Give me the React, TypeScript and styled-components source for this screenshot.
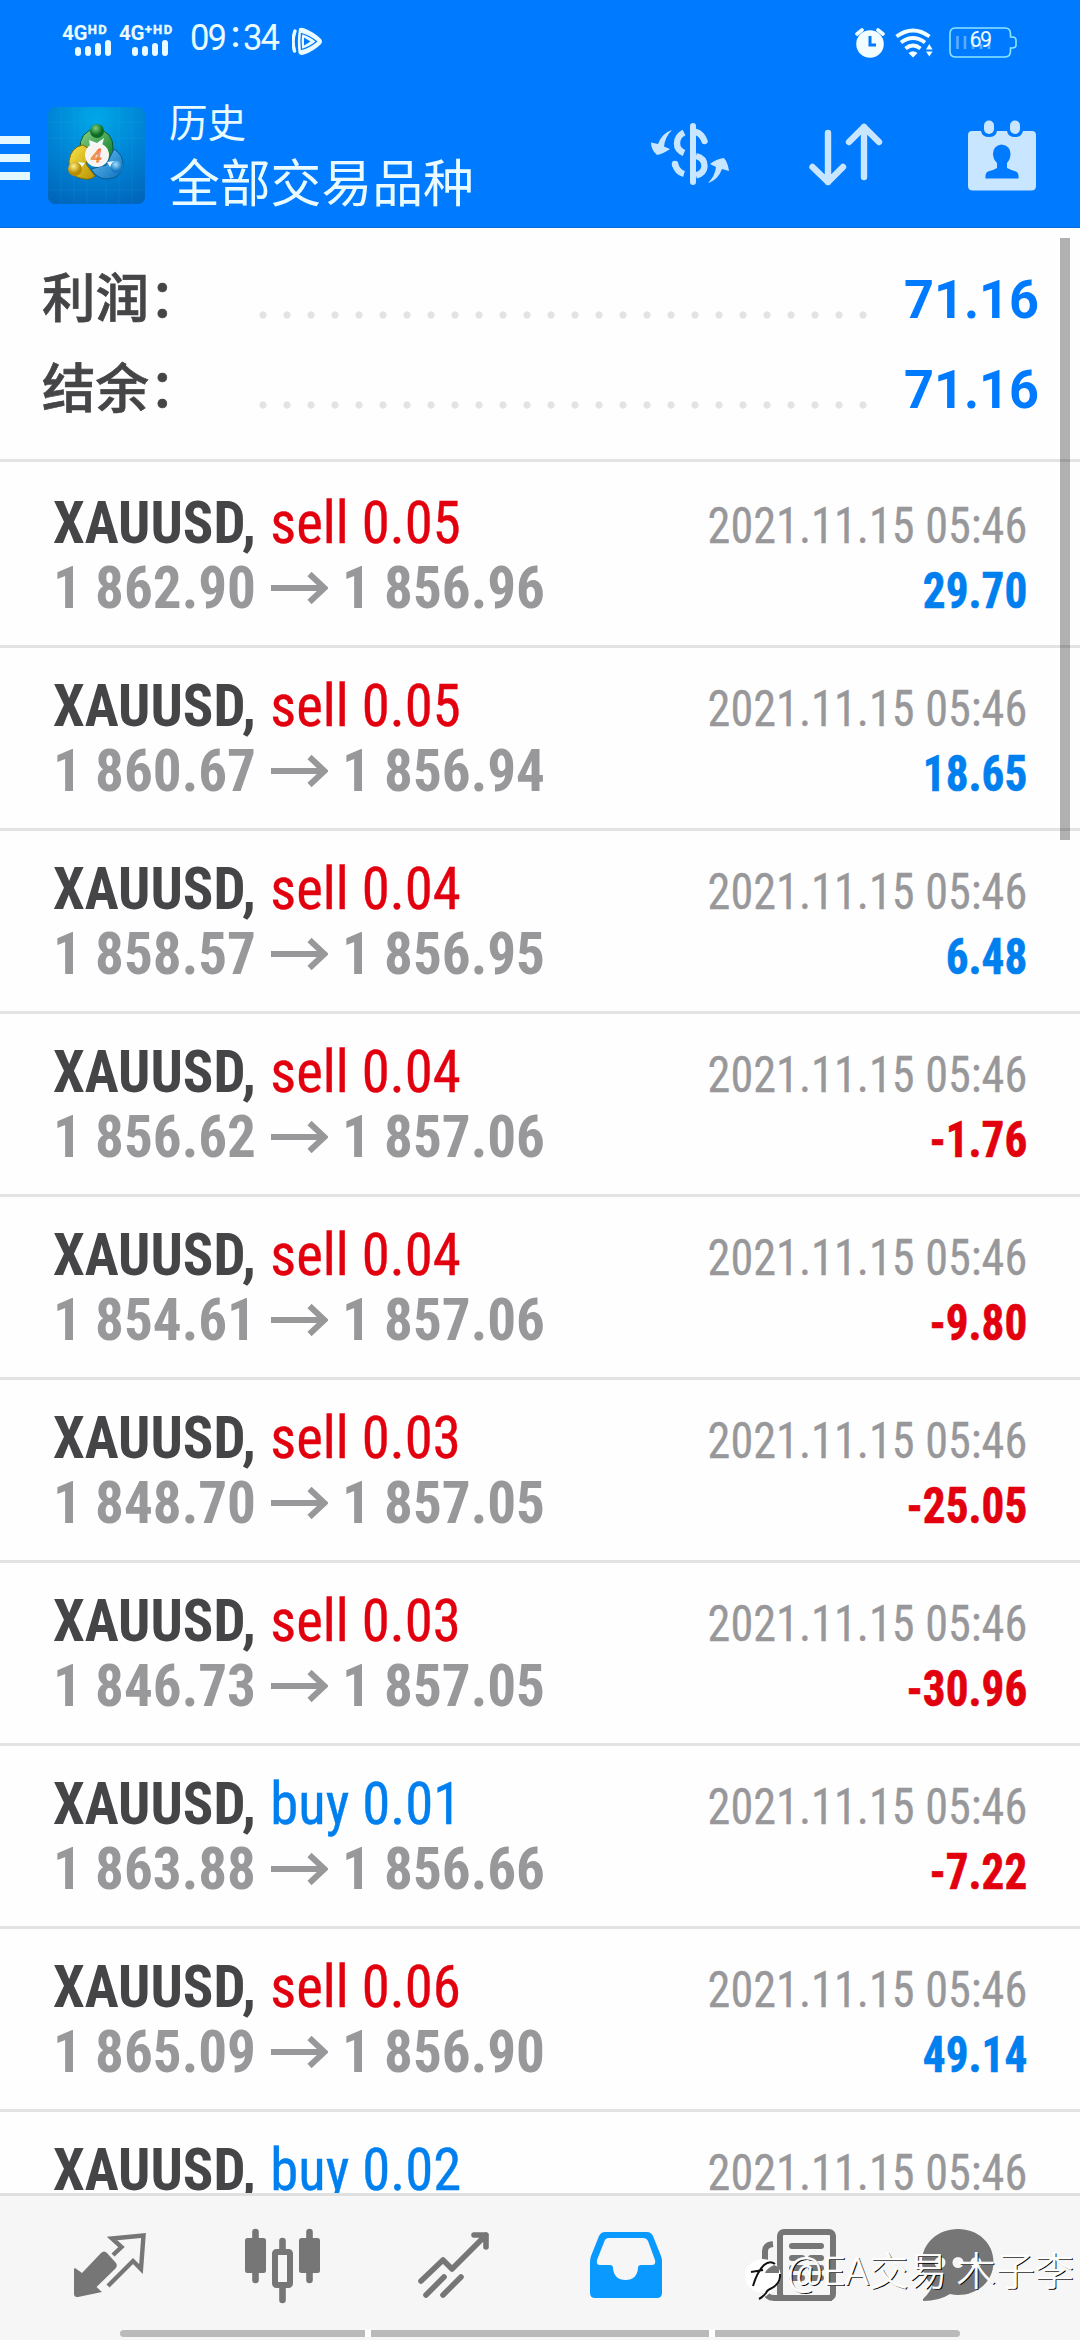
import React from 'react';
import styled, { createGlobalStyle } from 'styled-components';

const BLUE = '#007bff';
const VALUE_BLUE = '#007fef';
const RED = '#e2000f';
const GREY = '#98989b';
const INK = '#454547';
const LINE = '#e3e3e3';
const ICE = '#c8e6ff';
const NAV_ICON = '#767676';

const CJK = '"Noto Sans CJK SC", sans-serif';
const CONDENSED = '"Roboto Condensed", Roboto, sans-serif';

const GlobalStyle = createGlobalStyle`
  body { margin: 0; background: #fff; }
  * { box-sizing: border-box; }
  svg { display: block; flex: none; }
`;

const Screen = styled.div`
  position: relative;
  display: flex;
  flex-direction: column;
  width: 1080px;
  height: 2340px;
  overflow: hidden;
  background: #fefefe;
  font-family: ${CONDENSED};
`;

const Header = styled.header`
  display: flex;
  flex-direction: column;
  height: 228px;
  background: ${BLUE};
  border-bottom: 1px solid #0a6fd8;
  color: #e9fbff;
`;

const StatusBar = styled.div`
  display: flex;
  justify-content: space-between;
  height: 84px;
  padding: 0 63px 0 62px;
`;

const StatusGroup = styled.div`
  display: flex;
  align-items: flex-start;
`;

const Network = styled.div<{ $width: number }>`
  display: flex;
  flex-direction: column;
  width: ${p => p.$width}px;
  padding-top: 24px;
`;

const NetworkLabel = styled.div`
  display: flex;
  align-items: flex-start;
  height: 16px;
  font: 700 20.5px/18px Roboto, sans-serif;
  letter-spacing: -0.3px;
  white-space: nowrap;
`;

const NetworkTag = styled.span`
  margin-left: 0.5px;
  font-size: 13px;
  line-height: 12px;
  letter-spacing: 1.4px;
  -webkit-text-stroke: 0.4px currentColor;
`;

const Bars = styled.div`
  display: flex;
  align-items: flex-end;
  gap: 4px;
  height: 16px;
  margin-left: 13px;
`;

const Bar = styled.i<{ $height: number }>`
  width: 6px;
  height: ${p => p.$height}px;
  border-radius: 3px;
  background: #e9fbff;
`;

const Clock = styled.time`
  display: flex;
  align-items: flex-start;
  width: 102px;
  padding-top: 17px;
  font: 400 36px/42px Roboto, sans-serif;
  letter-spacing: -2px;
  white-space: nowrap;
`;

const ClockDigits = styled.span`
  width: 36px;
  transform: scaleX(0.96);
  transform-origin: left;
`;

const ClockColon = styled.span`
  width: 17px;
  margin-top: -3px;
  text-align: center;
  font-weight: 500;
`;

const StatusIcon = styled.div<{ $top: number; $gap?: number }>`
  padding-top: ${p => p.$top}px;
  margin-right: ${p => p.$gap ?? 0}px;
`;

const Battery = styled.div`
  position: relative;
`;

const BatteryLevel = styled.span`
  position: absolute;
  left: 0;
  top: 27px;
  width: 62px;
  text-align: center;
  font: 400 21.5px/26px Roboto, sans-serif;
  letter-spacing: -1.5px;
`;

const Toolbar = styled.div`
  display: flex;
  align-items: flex-start;
  flex: 1;
`;

const MenuButton = styled.button`
  display: flex;
  flex-direction: column;
  gap: 10px;
  width: 48px;
  margin: 52px 0 0;
  padding: 0;
  border: 0;
  background: none;
`;

const MenuStroke = styled.i`
  width: 30px;
  height: 8px;
  background: #e4f8ff;
`;

const Logo = styled.div`
  margin: 23px 24px 0 0;
`;

const Titles = styled.div`
  display: flex;
  flex-direction: column;
  width: 482px;
  font-family: ${CJK};
`;

const Title = styled.div`
  margin-top: 10px;
  font-size: 38.5px;
  line-height: 52px;
`;

const Subtitle = styled.div`
  font-size: 50.8px;
  line-height: 68px;
`;

const Actions = styled.div`
  display: flex;
  align-items: flex-start;
`;

const ActionIcon = styled.div<{ $top: number; $gap: number }>`
  padding-top: ${p => p.$top}px;
  margin-right: ${p => p.$gap}px;
`;

const Content = styled.main`
  flex: 1;
  min-height: 0;
  overflow: hidden;
`;

const Summary = styled.section`
  height: 234px;
  padding: 27px 41px 0 42px;
  border-bottom: 3px solid ${LINE};
`;

const SummaryRow = styled.div`
  display: flex;
  align-items: center;
  height: 90px;
`;

const SummaryLabel = styled.span`
  width: 209px;
  padding-bottom: 11px;
  color: ${INK};
  font: 500 53.5px/79px ${CJK};
  -webkit-text-stroke: 0.7px currentColor;
`;

const Leader = styled.span`
  width: 624px;
  height: 8px;
  margin-top: 29px;
  background: radial-gradient(circle at center, ${LINE} 3.2px, transparent 4px) 0 0 / 24px 8px repeat-x;
`;

const SummaryValue = styled.span`
  flex: 1;
  color: ${BLUE};
  text-align: right;
  font: 700 53px/90px Roboto, sans-serif;
  transform: scaleX(0.985);
  transform-origin: right;
`;

const Deals = styled.section`
  padding-top: 3px;
`;

const Deal = styled.article`
  display: flex;
  justify-content: space-between;
  height: 183px;
  padding: 25px 53px 0 53px;
  border-bottom: 3px solid ${LINE};
  white-space: pre;
`;

const DealMain = styled.div``;

const DealSide = styled.div`
  padding-top: 4px;
  text-align: right;
`;

const DealHead = styled.div`
  display: flex;
  color: ${INK};
  font-size: 60px;
  line-height: 65px;
  transform: scaleX(0.945);
  transform-origin: left;
`;

const Symbol = styled.b`
  width: 230px;
`;

const Side = styled.span<{ $buy: boolean }>`
  color: ${p => (p.$buy ? VALUE_BLUE : RED)};
  -webkit-text-stroke: 0.4px currentColor;
`;

const Prices = styled.div`
  display: flex;
  align-items: center;
  color: ${GREY};
`;

const Price = styled.b<{ $width: number }>`
  width: ${p => p.$width}px;
  font-size: 60px;
  line-height: 65px;
  transform: scaleX(0.952);
  transform-origin: left;
`;

const PriceArrow = styled.span`
  margin: 0 14px 0 1px;
`;

const Stamp = styled.div`
  color: ${GREY};
  font-size: 49.5px;
  line-height: 65px;
  transform: scaleX(0.934);
  transform-origin: right;
  -webkit-text-stroke: 0.3px currentColor;
`;

const Profit = styled.div<{ $loss: boolean }>`
  color: ${p => (p.$loss ? RED : VALUE_BLUE)};
  font-size: 49.5px;
  font-weight: 700;
  line-height: 65px;
  transform: scaleX(0.912);
  transform-origin: right;
  -webkit-text-stroke: 0.6px currentColor;
`;

const ScrollThumb = styled.div`
  position: absolute;
  left: 1060px;
  top: 238px;
  width: 10px;
  height: 602px;
  background: rgba(0, 0, 0, 0.3);
`;

const Nav = styled.nav`
  position: relative;
  display: flex;
  flex-direction: column;
  height: 147px;
  border-top: 3px solid #e0e0e0;
  background: #f6f6f6;
`;

const Tabs = styled.div`
  display: flex;
  height: 134px;
  padding: 32px 24px 0;
`;

const Tab = styled.div`
  display: flex;
  justify-content: center;
  width: 172px;
`;

const GestureBar = styled.div`
  display: flex;
  gap: 6px;
  width: 840px;
  height: 7px;
  margin-left: 120px;
  border-radius: 4px;
  overflow: hidden;
  background: #fff;
`;

const GesturePart = styled.i<{ $width: number }>`
  width: ${p => p.$width}px;
  background: #bababa;
`;

const Watermark = styled.div`
  position: absolute;
  left: 745px;
  top: 57px;
  display: flex;
  align-items: flex-start;
  color: #fff;
  font: 300 39px/46px Roboto, ${CJK};
  text-shadow: 1.3px 1.3px 0 #000;
  -webkit-text-stroke: 0.6px #fff;
  white-space: pre;
`;

const WatermarkText = styled.span`
  margin: -4px 0 0 5px;
`;

const deals = [
  ['sell 0.05', '1 862.90', '1 856.96', '29.70'],
  ['sell 0.05', '1 860.67', '1 856.94', '18.65'],
  ['sell 0.04', '1 858.57', '1 856.95', '6.48'],
  ['sell 0.04', '1 856.62', '1 857.06', '-1.76'],
  ['sell 0.04', '1 854.61', '1 857.06', '-9.80'],
  ['sell 0.03', '1 848.70', '1 857.05', '-25.05'],
  ['sell 0.03', '1 846.73', '1 857.05', '-30.96'],
  ['buy 0.01', '1 863.88', '1 856.66', '-7.22'],
  ['sell 0.06', '1 865.09', '1 856.90', '49.14'],
  ['buy 0.02'],
];

const Signal = ({ plus, width }: { plus?: boolean; width: number }) => (
  <Network $width={width}>
    <NetworkLabel>
      4G<NetworkTag>{plus ? '+HD' : 'HD'}</NetworkTag>
    </NetworkLabel>
    <Bars>
      {[9, 10, 13, 16].map(h => (
        <Bar key={h} $height={h} />
      ))}
    </Bars>
  </Network>
);

const PlayIcon = () => (
  <svg width="31" height="29" viewBox="0 0 31 29">
    <path d="M7 1.5Q9 0 12 1.2Q22 5 29 12Q31 14.5 29 17Q22 24 12 27.6Q8 28.6 6.5 26Q5 14 7 1.5Z" fill="#e9fbff" />
    <path d="M3 4Q-0.500 14 2.500 24" fill="none" stroke="#e9fbff" strokeWidth="3.4" strokeLinecap="round" />
    <path d="M9.5 6.5Q18 9 24.5 14.5Q18 20 9.5 22.5Q8.5 14 9.5 6.5Z" fill="none" stroke={BLUE} strokeWidth="1.3" />
    <path d="M12 10.5L18.5 14.5L12 18.5Z" fill={BLUE} />
  </svg>
);

const AlarmIcon = () => (
  <svg width="30" height="30" viewBox="0 0 30 30">
    <circle cx="15" cy="16" r="13.8" fill="#f1fdff" />
    <path d="M2 6L7 2M23 2L28 6" stroke="#f1fdff" strokeWidth="3.6" strokeLinecap="round" />
    <path d="M15 8V17H21" fill="none" stroke={BLUE} strokeWidth="3" />
  </svg>
);

const WifiIcon = () => (
  <svg width="40" height="30" viewBox="0 0 40 30">
    <g fill="none" stroke="#f1fdff" strokeWidth="3.8">
      <path d="M1.5 8.5Q18 -3.5 34.5 8.5" />
      <path d="M6 14.5Q18 5.5 30 14.5" />
      <path d="M10.5 20.5Q18 14.5 25.5 20.5" />
    </g>
    <path d="M13.5 25Q18 21.5 22.5 25L18 29.5Z" fill="#f1fdff" />
    <path d="M31 21.5L34.3 16L37.6 21.5ZM31 23.5L34.3 28.5L37.6 23.5Z" fill="#f1fdff" />
  </svg>
);

const BatteryIcon = () => (
  <svg width="68" height="31" viewBox="0 0 68 31">
    <path
      d="M6 1H56Q61.5 1 61.5 7V10H63Q67 10 67 13V18Q67 21 63 21H61.5V24Q61.5 30 56 30H6Q1 30 1 24V7Q1 1 6 1Z"
      fill="none" stroke="#8fe6ff" strokeWidth="1.6"
    />
    <path d="M8.5 9V22M16 9V22M24 9V22M32 17V22M40 12V22" stroke="#5eacff" strokeWidth="2.6" />
  </svg>
);

const MetaTraderLogo = () => (
  <svg width="97" height="97" viewBox="0 0 97 97">
    <defs>
      <radialGradient id="tile" cx="50%" cy="12%" r="95%">
        <stop offset="0" stopColor="#00a8e8" />
        <stop offset="0.5" stopColor="#0085d6" />
        <stop offset="1" stopColor="#0066bc" />
      </radialGradient>
      <linearGradient id="green" x1="0" y1="0" x2="1" y2="1">
        <stop offset="0" stopColor="#8fd48b" />
        <stop offset="1" stopColor="#087a26" />
      </linearGradient>
      <linearGradient id="gold" x1="0" y1="0" x2="1" y2="1">
        <stop offset="0" stopColor="#fbe64a" />
        <stop offset="1" stopColor="#b99000" />
      </linearGradient>
      <linearGradient id="azure" x1="0" y1="0" x2="1" y2="1">
        <stop offset="0" stopColor="#69c4f4" />
        <stop offset="1" stopColor="#0c6fba" />
      </linearGradient>
      <radialGradient id="greenBall" cx="40%" cy="30%">
        <stop offset="0" stopColor="#7dcf7d" />
        <stop offset="1" stopColor="#0b6b22" />
      </radialGradient>
      <radialGradient id="goldBall" cx="40%" cy="30%">
        <stop offset="0" stopColor="#fff08a" />
        <stop offset="1" stopColor="#b88c00" />
      </radialGradient>
      <radialGradient id="azureBall" cx="40%" cy="30%">
        <stop offset="0" stopColor="#a5e0fb" />
        <stop offset="1" stopColor="#1278c4" />
      </radialGradient>
    </defs>
    <rect width="97" height="97" rx="7" fill="url(#tile)" />
    <path d="M13 0V97M26 0V97M39 0V97M58 0V97M71 0V97M84 0V97M0 15H97M0 31H97M0 83H97" stroke="#35b4f0" strokeOpacity="0.12" />
    <path d="M32 43Q31 24 48 22Q66 24 65 43Q66 49 61 53L50 38L38 41Z" fill="url(#green)" stroke="#0b5c33" strokeWidth="1" />
    <path d="M35 38Q23 40 21 54Q20 70 36 72Q43 73 47 69L38 57L41 42Z" fill="url(#gold)" stroke="#7d6a00" strokeWidth="1" />
    <path d="M66 42Q76 48 75 60Q73 71 59 72Q49 72 43 62L58 58Z" fill="url(#azure)" stroke="#0a5790" strokeWidth="1" />
    <path d="M41 33L49 36L56 31L54 39H42ZM30 55L37 56L33 61ZM59 55L67 54L62 60Z" fill="#eefcff" />
    <circle cx="49" cy="24" r="7" fill="url(#greenBall)" />
    <circle cx="27" cy="62" r="7" fill="url(#goldBall)" />
    <circle cx="69" cy="60" r="6.5" fill="url(#azureBall)" />
    <circle cx="49" cy="48" r="12" fill="#f7f5f3" />
    <text x="48.500" y="54.500" textAnchor="middle" fontFamily="Roboto, sans-serif" fontStyle="italic" fontSize="19" fill="#ffc79a" stroke="#ee7c35" strokeWidth="0.9">4</text>
  </svg>
);

const DollarIcon = () => (
  <svg width="78" height="62" viewBox="0 0 78 62">
    <path d="M42 3V59" stroke={ICE} strokeWidth="6" strokeLinecap="round" />
    <g fill="none" stroke={ICE} strokeWidth="6.400">
      <path d="M33 9.5Q26 13 26 20.5Q26 27 33 30" />
      <path d="M24 41Q26 49 33 51" />
      <path d="M45 9Q51 11 53.5 18" strokeLinecap="round" />
      <path d="M45 33Q53.500 35 53.5 43Q53.5 50 45 52.5" />
      <path d="M24 41V41.500" strokeLinecap="round" />
    </g>
    <path d="M21 7Q11 10 7 21L0 19.500Q0 27 6 32Q12 31 19 26L13 23.500Q14 14 21 7Z" fill={ICE} />
    <path d="M57 60Q67 57 71 46L78 48Q77 40 73 35Q65 36 59 41L65 44Q64 53 57 60Z" fill={ICE} />
  </svg>
);

const SortIcon = () => (
  <svg width="74" height="64" viewBox="0 0 74 64">
    <g fill="none" stroke={ICE} strokeWidth="6.4" strokeLinecap="round" strokeLinejoin="round">
      <path d="M19 10V59M3.500 44L19 59L34 44" />
      <path d="M55 54V4M40 19L55 4L70 19" />
    </g>
  </svg>
);

const CalendarIcon = () => (
  <svg width="68" height="71" viewBox="0 0 68 71">
    <path d="M4 11H13Q14 17 21 17Q28 17 29 11H39Q40 17 47 17Q54 17 55 11H64Q68 11 68 15V66Q68 70.500 63 70.500H5Q0 70.500 0 66V15Q0 11 4 11Z" fill={ICE} />
    <rect x="16" y="0.500" width="10" height="13.500" rx="5" fill={ICE} />
    <rect x="42" y="0.500" width="10" height="13.500" rx="5" fill={ICE} />
    <path d="M33.500 24.500Q42.500 25.500 42.500 34Q42.500 39 39 43V48Q44 50.500 48 51.500Q51 53 50.500 58.500H17.500Q17 53 20 51.500Q25 50.500 29 48V43Q25 39 25 34Q25 25.500 33.500 24.500Z" fill={BLUE} />
  </svg>
);

const ArrowIcon = () => (
  <svg width="57" height="32" viewBox="0 0 57 32">
    <path d="M0 16H53M38.500 2L53.500 16L38.500 30" fill="none" stroke={GREY} strokeWidth="6" />
  </svg>
);

const TradeIcon = () => (
  <svg width="72" height="74" viewBox="0 0 72 74">
    <path d="M1 40L8 45L27 25Q30 22 33 25L42 35Q44 38 41 41L22.500 59L28 64L4 69Q0 69.500 0 66V41Z" fill={NAV_ICON} />
    <path d="M39 27L47.500 19L38 10.500L69.500 7.500L67 41L59 33L34 58" fill="none" stroke={NAV_ICON} strokeWidth="4.400" />
  </svg>
);

const CandlesIcon = () => (
  <svg width="75" height="76" viewBox="0 0 75 76">
    <path d="M10.500 4V52M64.500 4V52M37.500 13V22M37.500 60V72" stroke={NAV_ICON} strokeWidth="6.600" strokeLinecap="round" />
    <rect x="0" y="10" width="21" height="35" rx="2.500" fill={NAV_ICON} />
    <rect x="54" y="10" width="21" height="35" rx="2.500" fill={NAV_ICON} />
    <rect x="30" y="24" width="15" height="33" rx="1.500" fill="#f6f6f6" stroke={NAV_ICON} strokeWidth="6" />
  </svg>
);

const TrendIcon = () => (
  <svg width="72" height="74" viewBox="0 0 72 74">
    <path d="M3 53L25 32L34 41L68 7M56 7H68V19M8 67L26 49M25 67L43 49" fill="none" stroke={NAV_ICON} strokeWidth="5.600" strokeLinecap="round" strokeLinejoin="round" />
  </svg>
);

const InboxIcon = () => (
  <svg width="72" height="74" viewBox="0 0 72 74">
    <path fillRule="evenodd" fill="#0a9aff" d="M15 4H57Q61 4 63 8L71 28Q72 30 72 34V65Q72 70 67 70H5Q0 70 0 65V34Q0 31 1 28L9 8Q11 4 15 4ZM19 10Q15.500 10 14.500 13L7 32Q6 37 10 37H20Q23 37 23 40Q24 52 35.500 52Q47 52 48 40Q48 37 51 37H62Q66 37 65 32L58 13Q56.500 10 53 10Z" />
  </svg>
);

const NewsIcon = () => (
  <svg width="76" height="76" viewBox="-2 0 76 76">
    <path d="M11 16Q3 17 3 23V62Q4 70 12 70" fill="none" stroke={NAV_ICON} strokeWidth="6" />
    <rect x="18" y="4" width="53" height="66" rx="4" fill="#f6f6f6" stroke={NAV_ICON} strokeWidth="6" />
    <path d="M12 70H70" stroke={NAV_ICON} strokeWidth="6" />
    <path d="M30 18H59M30 30H40M49 30H59M30 40H40M49 40H59M30 50H40M49 50H59" stroke={NAV_ICON} strokeWidth="6" strokeLinecap="round" />
  </svg>
);

const ChatIcon = () => (
  <svg width="96" height="76" viewBox="0 0 96 76">
    <path d="M36 1C56 1 71.500 15 71.500 34C71.500 53 56 67 36 67Q32 67 28 66Q17 73 1.500 73Q0 72 2 70Q10 62 10 57Q0 48 0 34C0 15 16 1 36 1Z" fill={NAV_ICON} />
    <circle cx="18" cy="34.500" r="5.500" fill="#f6f6f6" />
    <circle cx="36" cy="34.500" r="5.500" fill="#f6f6f6" />
    <circle cx="54" cy="34.500" r="5.500" fill="#f6f6f6" />
  </svg>
);

const WatermarkBadge = () => (
  <svg width="37" height="50" viewBox="0 0 37 50">
    <path d="M18 6A18 17 0 1 0 18 40Q16 44 13 47Q24 43 28 36Q36 31 36 23Q34 7 18 6Z" fill="#fff" />
    <path d="M6 19L18 17M8 33Q12 19 19 12Q25 7 30 11" fill="none" stroke="#111" strokeWidth="2" />
    <path d="M35 21Q36 30 27 35Q22 37 21 40Q18 44 14 46" fill="none" stroke="#111" strokeWidth="2" />
    <path d="M29 12L34 14V20H20Q22 15 29 12Z" fill="#777" />
  </svg>
);

export default function App() {
  return (
    <Screen>
      <GlobalStyle />
      <Header>
        <StatusBar>
          <StatusGroup>
            <Signal width={57} />
            <Signal width={71} plus />
            <Clock>
              <ClockDigits>09</ClockDigits>
              <ClockColon>:</ClockColon>
              <ClockDigits>34</ClockDigits>
            </Clock>
            <StatusIcon $top={27}><PlayIcon /></StatusIcon>
          </StatusGroup>
          <StatusGroup>
            <StatusIcon $top={28} $gap={10}><AlarmIcon /></StatusIcon>
            <StatusIcon $top={28} $gap={14}><WifiIcon /></StatusIcon>
            <Battery>
              <StatusIcon $top={27}><BatteryIcon /></StatusIcon>
              <BatteryLevel>69</BatteryLevel>
            </Battery>
          </StatusGroup>
        </StatusBar>
        <Toolbar>
          <MenuButton aria-label="menu">
            <MenuStroke /><MenuStroke /><MenuStroke />
          </MenuButton>
          <Logo><MetaTraderLogo /></Logo>
          <Titles>
            <Title>历史</Title>
            <Subtitle>全部交易品种</Subtitle>
          </Titles>
          <Actions>
            <ActionIcon $top={39} $gap={80}><DollarIcon /></ActionIcon>
            <ActionIcon $top={39} $gap={85}><SortIcon /></ActionIcon>
            <ActionIcon $top={36} $gap={0}><CalendarIcon /></ActionIcon>
          </Actions>
        </Toolbar>
      </Header>

      <Content>
        <Summary>
          {['利润：', '结余：'].map(label => (
            <SummaryRow key={label}>
              <SummaryLabel>{label}</SummaryLabel>
              <Leader />
              <SummaryValue>71.16</SummaryValue>
            </SummaryRow>
          ))}
        </Summary>
        <Deals>
          {deals.map(([side, open, close, profit], i) => (
            <Deal key={i}>
              <DealMain>
                <DealHead>
                  <Symbol>XAUUSD,</Symbol>
                  <Side $buy={side.startsWith('buy')}>{side}</Side>
                </DealHead>
                {open && (
                  <Prices>
                    <Price $width={217}>{open}</Price>
                    <PriceArrow><ArrowIcon /></PriceArrow>
                    <Price $width={220}>{close}</Price>
                  </Prices>
                )}
              </DealMain>
              <DealSide>
                <Stamp>2021.11.15 05:46</Stamp>
                {profit && <Profit $loss={profit.startsWith('-')}>{profit}</Profit>}
              </DealSide>
            </Deal>
          ))}
        </Deals>
      </Content>
      <ScrollThumb />

      <Nav>
        <Tabs>
          <Tab><TradeIcon /></Tab>
          <Tab><CandlesIcon /></Tab>
          <Tab><TrendIcon /></Tab>
          <Tab><InboxIcon /></Tab>
          <Tab><NewsIcon /></Tab>
          <Tab><ChatIcon /></Tab>
        </Tabs>
        <GestureBar>
          <GesturePart $width={245} />
          <GesturePart $width={338} />
          <GesturePart $width={245} />
        </GestureBar>
        <Watermark>
          <WatermarkBadge />
          <WatermarkText>@EA交易 木子李</WatermarkText>
        </Watermark>
      </Nav>
    </Screen>
  );
}
